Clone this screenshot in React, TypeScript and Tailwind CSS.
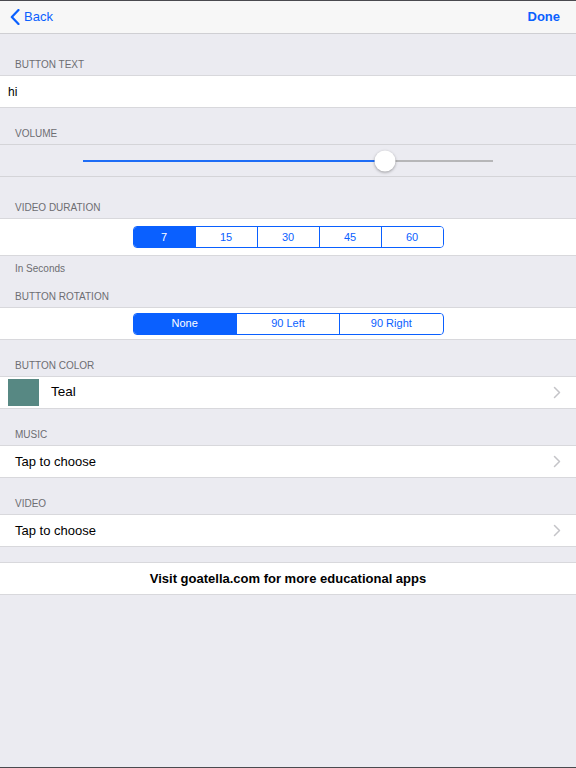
import { useState } from "react";

const BLUE = "#0a60ff";

// iOS-style grouped table header
function SectionHeader({ title, className }: { title: string; className: string }) {
    return (
        <div className={`flex items-end px-[15px] text-[10px] uppercase text-[#6d6d72] ${className}`}>
            <span className="leading-[14px] pb-[3px]">{title}</span>
        </div>
    );
}

function Chevron() {
    return (
        <svg width="8" height="13" viewBox="0 0 8 13" className="shrink-0">
            <path d="M1.5 1.5 L6.5 6.5 L1.5 11.5" fill="none" stroke="#c4c4c8" strokeWidth="1.5" strokeLinecap="round" strokeLinejoin="round" />
        </svg>
    );
}

function Segmented({
    options,
    selected,
    onSelect,
    width,
}: {
    options: string[];
    selected: number;
    onSelect: (i: number) => void;
    width: string;
}) {
    return (
        <div className={`flex h-[22px] rounded-[4px] border border-[#0a60ff] overflow-hidden ${width}`}>
            {options.map((opt, i) => (
                <button
                    key={opt}
                    onClick={() => onSelect(i)}
                    className={`flex-1 text-[11px] ${i > 0 ? "border-l border-[#0a60ff]" : ""} ${
                        i === selected ? "bg-[#0a60ff] text-white" : "bg-white text-[#0a60ff]"
                    }`}
                >
                    {opt}
                </button>
            ))}
        </div>
    );
}

function ChooseRow({ children }: { children: React.ReactNode }) {
    return (
        <div className="flex items-center h-[33px] bg-white border-y border-[#d8d8dc] pr-[15px]">
            <div className="flex-1 flex items-center">{children}</div>
            <Chevron />
        </div>
    );
}

export default function App() {
    const [duration, setDuration] = useState(0);
    const [rotation, setRotation] = useState(0);
    const volume = 0.737;

    return (
        <div
            className="w-[576px] h-[768px] bg-[#ebebf1] flex flex-col border-t border-b border-[#4a4a4f] overflow-hidden"
            style={{ fontFamily: '"Liberation Sans", Arial, sans-serif' }}
        >
            {/* top bar */}
            <div className="h-[33px] shrink-0 bg-[#f7f7f7] border-b border-[#cfcfd3] flex items-center justify-between px-[10px]">
                <button className="flex items-center gap-[4px]" style={{ color: BLUE }}>
                    <svg width="10" height="16" viewBox="0 0 10 16">
                        <path d="M8.5 1 L1.8 8 L8.5 15" fill="none" stroke={BLUE} strokeWidth="2.2" strokeLinecap="round" strokeLinejoin="round" />
                    </svg>
                    <span className="text-[13px]">Back</span>
                </button>
                <button className="text-[13px] font-bold pr-[6px]" style={{ color: BLUE }}>
                    Done
                </button>
            </div>

            <SectionHeader title="Button Text" className="h-[41px]" />
            <div className="h-[33px] bg-white border-y border-[#d8d8dc] flex items-center px-[8px] text-[12px] text-black">
                hi
            </div>

            <SectionHeader title="Volume" className="h-[36px]" />
            <div className="h-[33px] border-y border-[#d4d4d8] flex items-center justify-center">
                <div className="relative w-[410px] h-[2px] bg-[#b6b6b8]">
                    <div className="absolute left-0 top-0 h-[2px] bg-[#1e6cf5]" style={{ width: `${volume * 100}%` }} />
                    <div
                        className="absolute top-1/2 w-[21px] h-[21px] -translate-x-1/2 -translate-y-1/2 rounded-full bg-white shadow-[0_1px_3px_rgba(0,0,0,0.35)]"
                        style={{ left: `${volume * 100}%` }}
                    />
                </div>
            </div>

            <SectionHeader title="Video Duration" className="h-[41px]" />
            <div className="h-[38px] bg-white border-y border-[#d8d8dc] flex items-center justify-center">
                <Segmented options={["7", "15", "30", "45", "60"]} selected={duration} onSelect={setDuration} width="w-[311px]" />
            </div>
            <div className="h-[25px] px-[15px] flex items-center text-[10px] text-[#6d6d72]">In Seconds</div>

            <SectionHeader title="Button Rotation" className="h-[26px]" />
            <div className="h-[33px] bg-white border-y border-[#d8d8dc] flex items-center justify-center">
                <Segmented options={["None", "90 Left", "90 Right"]} selected={rotation} onSelect={setRotation} width="w-[311px]" />
            </div>

            <SectionHeader title="Button Color" className="h-[36px]" />
            <ChooseRow>
                <div className="ml-[8px] w-[31px] h-[27px] bg-[#578883]" />
                <span className="ml-[12px] text-[13.5px] text-black">Teal</span>
            </ChooseRow>

            <SectionHeader title="Music" className="h-[36px]" />
            <ChooseRow>
                <span className="ml-[15px] text-[13px] text-black">Tap to choose</span>
            </ChooseRow>

            <SectionHeader title="Video" className="h-[36px]" />
            <ChooseRow>
                <span className="ml-[15px] text-[13px] text-black">Tap to choose</span>
            </ChooseRow>

            <div className="h-[15px]" />
            <div className="h-[33px] bg-white border-y border-[#d8d8dc] flex items-center justify-center text-[13px] font-bold text-black">
                Visit goatella.com for more educational apps
            </div>
        </div>
    );
}
